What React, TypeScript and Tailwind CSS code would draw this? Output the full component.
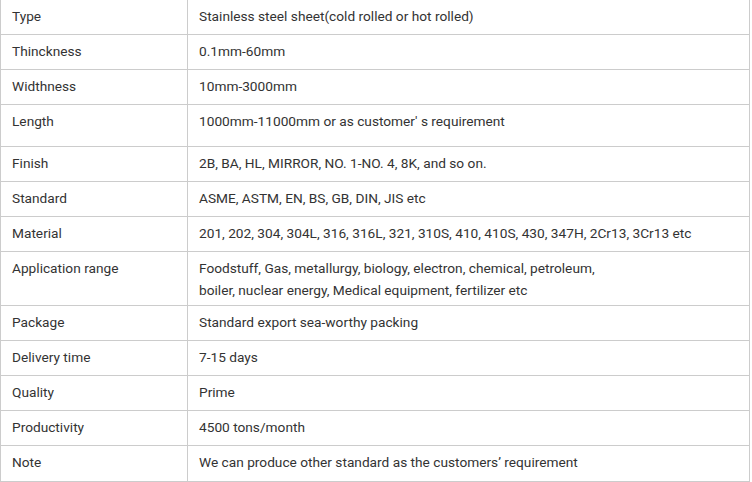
// Specification table for stainless steel sheet
const rows: { label: string; value: string[]; h: string }[] = [
  { label: "Type", value: ["Stainless steel sheet(cold rolled or hot rolled)"], h: "h-[35px]" },
  { label: "Thinckness", value: ["0.1mm-60mm"], h: "h-[35px]" },
  { label: "Widthness", value: ["10mm-3000mm"], h: "h-[35px]" },
  { label: "Length", value: ["1000mm-11000mm or as customer' s requirement"], h: "h-[42px]" },
  { label: "Finish", value: ["2B, BA, HL, MIRROR, NO. 1-NO. 4, 8K, and so on."], h: "h-[35px]" },
  { label: "Standard", value: ["ASME, ASTM, EN, BS, GB, DIN, JIS etc"], h: "h-[35px]" },
  {
    label: "Material",
    value: ["201, 202, 304, 304L, 316, 316L, 321, 310S, 410, 410S, 430, 347H, 2Cr13, 3Cr13 etc"],
    h: "h-[35px]",
  },
  {
    label: "Application range",
    value: [
      "Foodstuff, Gas, metallurgy, biology, electron, chemical, petroleum,",
      "boiler, nuclear energy, Medical equipment, fertilizer etc",
    ],
    h: "h-[54px]",
  },
  { label: "Package", value: ["Standard export sea-worthy packing"], h: "h-[35px]" },
  { label: "Delivery time", value: ["7-15 days"], h: "h-[35px]" },
  { label: "Quality", value: ["Prime"], h: "h-[35px]" },
  { label: "Productivity", value: ["4500 tons/month"], h: "h-[35px]" },
  { label: "Note", value: ["We can produce other standard as the customers’ requirement"], h: "h-[35px]" },
];

export default function App() {
  return (
    <div className="w-[752px] h-[482px] overflow-hidden bg-white font-['Roboto',_'Liberation_Sans',_sans-serif] text-[13.7px] leading-[22px] text-[#333]">
      <div className="-mt-px w-[750px] border border-[#cccccc]">
        {rows.map((r, i) => (
          <div
            key={r.label}
            className={`flex ${r.h} ${i < rows.length - 1 ? "border-b border-[#cccccc]" : ""}`}
          >
            <div className="w-[187px] shrink-0 border-r border-[#cccccc] pl-[11px] pt-[5px]">{r.label}</div>
            <div className="flex-1 pl-[11px] pt-[5px]">
              {r.value.map((v) => (
                <div key={v}>{v}</div>
              ))}
            </div>
          </div>
        ))}
      </div>
    </div>
  );
}
